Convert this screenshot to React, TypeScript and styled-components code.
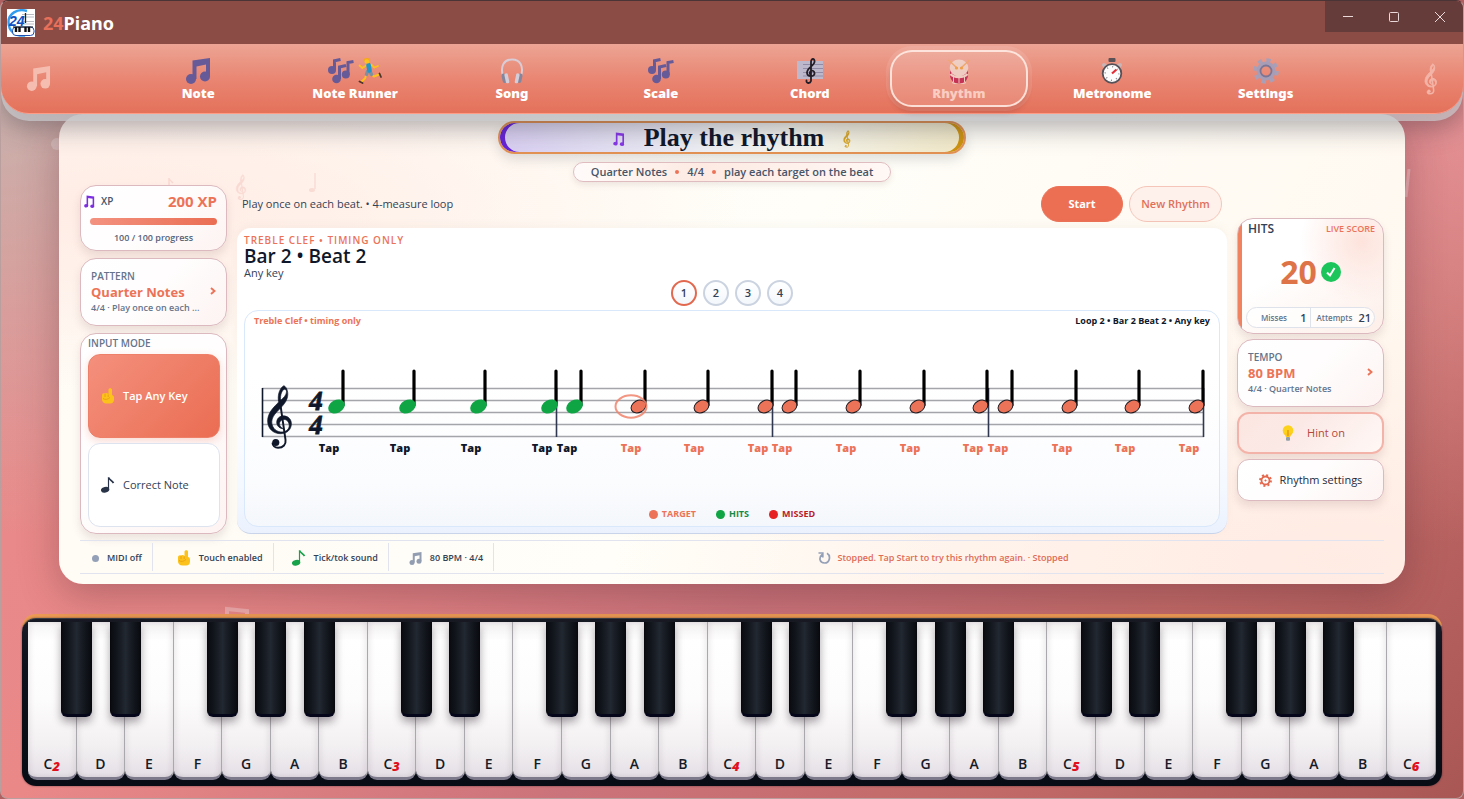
import React from 'react';
import styled, { createGlobalStyle, css } from 'styled-components';

const CORAL = '#ec7357';
const INK = '#0f172a';
const SLATE = '#64748b';
const UI = '"Trebuchet MS", "Open Sans", "Noto Sans", sans-serif';
const HEAVY = '"Segoe UI Black", "Noto Sans", sans-serif';

const GlobalStyle = createGlobalStyle`
  * { box-sizing: border-box; }
  body { margin: 0; font-family: ${UI}; color: ${INK}; background: #b06060; }
  button { font-family: inherit; margin: 0; padding: 0; border: 0; background: none; color: inherit; cursor: pointer; }
  svg { display: block; flex: none; }
  h1, h2, p, ul, dl, dd, dt { margin: 0; padding: 0; }
`;

const Page = styled.div`
  min-height: 100vh;
  position: relative;
  overflow: hidden;
  display: flex;
  flex-direction: column;
  border: 1px solid #b9a09e;
  border-top-color: #4a3436;
  border-radius: 8px;
  background:
    radial-gradient(circle at 0% 12%, rgba(190, 190, 184, 0.75), transparent 27%),
    radial-gradient(circle at 100% 18%, rgba(255, 176, 180, 0.5), transparent 25%),
    linear-gradient(135deg, #e88b8b 0%, #ea8888 36%, #cb737a 60%, #c26a68 78%, #a95755 100%);
`;

const Backdrop = styled.svg`
  position: absolute;
  inset: 0;
  pointer-events: none;
`;

const CardBackdrop = styled(Backdrop)`
  z-index: -1;
`;

/* ---------- title bar ---------- */

const TitleBar = styled.header`
  height: 43px;
  display: flex;
  align-items: center;
  gap: 8px;
  padding-left: 6px;
  background: #8a4c45;
  position: relative;
  z-index: 3;
`;

const Brand = styled.span`
  font: 700 18px/24px "Segoe UI", "Noto Sans", sans-serif;
  color: #fff;
  b { font-weight: 700; color: #e8705a; }
`;

const WindowControls = styled.div`
  margin-left: auto;
  align-self: flex-start;
  display: flex;
  background: #663c3b;
`;

const WindowButton = styled.button`
  width: 46px;
  height: 31px;
  display: grid;
  place-items: center;
`;

/* ---------- navigation ---------- */

const Nav = styled.nav`
  height: 70px;
  display: grid;
  grid-template-columns: 1fr auto 1fr;
  align-items: center;
  padding: 0 25px;
  border-radius: 0 0 28px 28px;
  border-bottom: 1px solid #ff9c86;
  background: linear-gradient(180deg, #eda494 0%, #e98673 50%, #e4715a 100%);
  box-shadow: 0 7px 0 rgba(204, 204, 207, 0.7), 0 14px 26px rgba(40, 40, 50, 0.36);
  position: relative;
  z-index: 2;
  > svg:last-child { justify-self: end; }
`;

const NavItems = styled.div`
  display: flex;
  gap: 11px;
`;

const NavItem = styled.button<{ $active?: boolean }>`
  min-width: 138px;
  height: 57px;
  padding: 2px 34px 0;
  border: 2px solid transparent;
  border-width: 2px 0;
  border-radius: 22px;
  display: flex;
  flex-direction: column;
  align-items: center;
  justify-content: center;
  font: 900 13px/18px ${HEAVY};
  color: #fff;
  ${p => p.$active && css`
    color: rgba(255, 226, 218, 0.75);
    border: 2px solid rgba(255, 238, 232, 0.85);
    background: rgba(255, 255, 255, 0.14);
    box-shadow: 0 0 0 4px rgba(255, 255, 255, 0.1), 0 6px 4px rgba(150, 60, 50, 0.25);
    svg { opacity: 0.75; }
  `}
`;

const IconPair = styled.span`
  display: flex;
  gap: 4px;
`;

/* ---------- main card ---------- */

const Card = styled.main`
  margin: 0 58px;
  padding: 7px 21px 10px;
  border-radius: 24px;
  display: flex;
  flex-direction: column;
  position: relative;
  z-index: 1;
  background:
    radial-gradient(ellipse at 5% 20%, rgba(255, 232, 224, 0.8), transparent 34%),
    radial-gradient(ellipse at 95% 95%, rgba(255, 232, 224, 0.8), transparent 40%),
    linear-gradient(120deg, #fffaf4, #fffef8 50%, #fff7ee);
  box-shadow: 0 12px 40px rgba(70, 30, 45, 0.32);
`;

const TitlePill = styled.h1`
  align-self: center;
  width: 468px;
  max-width: 100%;
  height: 33px;
  display: flex;
  align-items: center;
  justify-content: center;
  gap: 19px;
  border: 2px solid #e39254;
  border-radius: 17px;
  background: linear-gradient(90deg, #d9cff2 0%, #eef0f4 45%, #f6f5ee 65%, #f2e9c8 100%);
  box-shadow: inset 5px 0 0 #6722d8, inset -5px 0 0 #cf9410, 0 6px 12px rgba(60, 70, 80, 0.16);
  font: 700 26px/28px Georgia, "Liberation Serif", serif;
  svg { margin-top: 3px; }
`;

const SubtitlePill = styled.p`
  align-self: center;
  height: 20px;
  margin: 8px 0 3px;
  padding: 0 17px;
  display: flex;
  align-items: center;
  gap: 8px;
  border: 1px solid #dfbcc0;
  border-radius: 10px;
  background: linear-gradient(90deg, #fffbfa, #fdeae3 40%, #fff8f5);
  box-shadow: 0 3px 6px rgba(80, 50, 50, 0.1);
  font: 600 11px/18px ${UI};
  color: #475569;
  i { width: 4px; height: 4px; border-radius: 50%; background: ${CORAL}; }
`;

const Columns = styled.div`
  display: grid;
  grid-template-columns: 147px minmax(0, 1fr) 147px;
  gap: 10px;
  min-height: 349px;
`;

const Side = styled.aside<{ $right?: boolean }>`
  display: flex;
  flex-direction: column;
  gap: ${p => (p.$right ? 5 : 7)}px;
  padding-top: ${p => (p.$right ? 33 : 0)}px;
`;

const panel = css`
  border: 1px solid #dbb9bf;
  border-radius: 16px;
  background: linear-gradient(135deg, #fff, #fffdfd 50%, #fdf3f2);
  box-shadow: 0 5px 8px rgba(110, 80, 80, 0.14);
`;

const XpCard = styled.section`
  ${panel}
  height: 66px;
  padding: 5px 9px 4px 3px;
`;

const XpRow = styled.div`
  display: flex;
  align-items: center;
  gap: 6px;
  font: 600 10px/20px ${UI};
  color: #475569;
  strong { margin-left: auto; font-size: 15px; font-weight: 700; color: ${CORAL}; }
`;

const XpBar = styled.div`
  height: 7px;
  margin: 7px 0 0 6px;
  border-radius: 4px;
  background: linear-gradient(90deg, #f39280, #ea6d52);
`;

const XpNote = styled.p`
  margin: 6px 0 0 6px;
  text-align: center;
  font: 600 9px/14px ${UI};
  color: #56647a;
`;

const PickerCard = styled.button`
  ${panel}
  height: 68px;
  padding: 0 10px 3px;
  display: flex;
  align-items: center;
  justify-content: space-between;
  text-align: left;
`;

const PickerText = styled.span`
  display: flex;
  flex-direction: column;
  min-width: 0;
  font: 600 10px/16px ${UI};
  color: ${SLATE};
  strong { font-size: 13px; line-height: 17px; font-weight: 700; color: ${CORAL}; }
  small { font-size: 9px; line-height: 13px; white-space: nowrap; }
`;

const ModeCard = styled.section`
  ${panel}
  flex: 1;
  padding: 2px 6px 6px 7px;
  display: flex;
  flex-direction: column;
  gap: 4px;
  h2 { font: 600 10px/14px ${UI}; color: ${SLATE}; }
`;

const ModeButton = styled.button<{ $active?: boolean }>`
  flex: 1;
  min-height: 83px;
  padding-left: 12px;
  display: flex;
  align-items: center;
  gap: 8px;
  border: 1px solid #dde3ef;
  border-radius: 12px;
  background: #fff;
  font: 500 11px/16px ${UI};
  color: #334155;
  & + & { margin-top: 1px; }
  ${p => p.$active && css`
    border-color: #ee8069;
    background: linear-gradient(135deg, #f4907d, #ea6d52);
    box-shadow: 0 3px 8px rgba(236, 115, 87, 0.25);
    color: #fff;
    font-weight: 600;
  `}
`;

/* ---------- centre ---------- */

const Centre = styled.section`
  display: flex;
  flex-direction: column;
  gap: 6px;
  padding-top: 1px;
`;

const Toolbar = styled.div`
  height: 36px;
  display: flex;
  align-items: center;
  gap: 6px;
  padding: 0 5px;
  font: 500 11px/16px ${UI};
  color: #334155;
  p { margin-right: auto; }
`;

const PillButton = styled.button<{ $primary?: boolean }>`
  height: 36px;
  width: ${p => (p.$primary ? 82 : 93)}px;
  border-radius: 18px;
  border: 1px solid ${p => (p.$primary ? '#ec7357' : '#f6c5b9')};
  background: ${p => (p.$primary ? '#ec6f54' : '#fef1eb')};
  color: ${p => (p.$primary ? '#fff' : '#e0705a')};
  font: ${p => (p.$primary ? 700 : 600)} 11px/16px ${UI};
`;

const Score = styled.div`
  flex: 1;
  display: flex;
  flex-direction: column;
  padding: 6px 7px;
  border-radius: 14px;
  border-bottom: 1px solid #c9d4ea;
  background: linear-gradient(180deg, #fff 0%, #fff 55%, #f4f8ff 85%, #ebf2fe 100%);
  box-shadow: 0 -3px 8px rgba(150, 140, 120, 0.06);
`;

const ScoreHead = styled.header`
  p { font: 500 11px/15px ${UI}; color: #334155; }
  p:first-child { font: 600 10px/13px ${UI}; letter-spacing: 1px; color: ${CORAL}; }
  h2 { font: 600 19px/18px ${UI}; color: ${INK}; }
`;

const Beats = styled.ol`
  list-style: none;
  margin: 0 0 4px;
  padding: 0;
  display: flex;
  justify-content: center;
  gap: 6px;
`;

const Beat = styled.li<{ $on?: boolean }>`
  width: 26px;
  height: 26px;
  display: grid;
  place-items: center;
  border: 2px solid ${p => (p.$on ? '#e2694f' : '#cbd3e1')};
  border-radius: 50%;
  background: linear-gradient(180deg, #fff, #f4f7fb);
  font: 600 11px/14px ${UI};
  color: #334155;
`;

const Sheet = styled.div`
  flex: 1;
  display: flex;
  flex-direction: column;
  border: 1px solid #d9e8fb;
  border-radius: 14px;
  background: linear-gradient(180deg, #fff 30%, #fbfcfe 80%, #f4f7fb 100%);
`;

const SheetHead = styled.div`
  display: flex;
  justify-content: space-between;
  padding: 3px 9px 0;
  font: 700 9px/14px ${UI};
  span:first-child { color: ${CORAL}; }
`;

const Staff = styled.svg`
  width: 100%;
  height: auto;
  margin-top: 37px;
  font: 800 11px ${UI};
`;

const Legend = styled.ul`
  margin: auto 0 4px;
  list-style: none;
  display: flex;
  justify-content: center;
  gap: 20px;
  font: 700 9px/16px ${UI};
`;

const LegendItem = styled.li<{ $color: string }>`
  display: flex;
  align-items: center;
  gap: 4px;
  color: ${p => p.$color};
`;

const Dot = styled.i<{ $color: string; $size?: number }>`
  width: ${p => p.$size ?? 9}px;
  height: ${p => p.$size ?? 9}px;
  border-radius: 50%;
  background: ${p => p.$color};
`;

/* ---------- right column ---------- */

const HitsCard = styled.section`
  ${panel}
  height: 116px;
  padding: 2px 8px 5px;
  display: flex;
  flex-direction: column;
  justify-content: space-between;
  background:
    linear-gradient(90deg, #f0825f 0 4px, transparent 4px),
    radial-gradient(circle at 85% 20%, #fde3dc, transparent 40%),
    linear-gradient(150deg, #fff 40%, #fdeee8);
`;

const HitsHead = styled.div`
  display: flex;
  align-items: center;
  justify-content: space-between;
  padding-left: 2px;
  font: 600 9px/16px ${UI};
  color: ${CORAL};
  h2 { font: 600 12px/16px ${UI}; color: #334155; }
`;

const HitsValue = styled.div`
  display: flex;
  align-items: center;
  justify-content: center;
  gap: 4px;
  font: 700 32px/36px ${UI};
  color: #dd7347;
`;

const Tally = styled.dl`
  display: grid;
  grid-template-columns: 1fr 1fr;
  border: 1px solid #dee2ea;
  border-radius: 11px;
  background: rgba(255, 255, 255, 0.7);
  font: 600 8px/19px ${UI};
  color: ${SLATE};
  div { display: flex; justify-content: space-between; padding: 0 3px 0 6px; }
  div:first-child { padding-left: 14px; border-right: 1px solid #dee2ea; }
  dd { font-size: 11px; color: #334155; }
`;

const SideButton = styled.button<{ $tint?: boolean }>`
  ${panel}
  height: 42px;
  display: flex;
  align-items: center;
  justify-content: center;
  gap: 8px;
  border-radius: 12px;
  font: 500 11px/16px ${UI};
  color: #1e293b;
  ${p => p.$tint && css`
    gap: 13px;
    padding-left: 6px;
    border: 2px solid #f4b3a8;
    background: linear-gradient(135deg, #fce6e1, #fbe9e6 40%, #fff8f5);
    color: #b4483c;
  `}
`;

/* ---------- status ---------- */

const Status = styled.footer`
  margin-top: 6px;
  height: 34px;
  display: flex;
  align-items: center;
  border-top: 1px solid #e1e4ee;
  border-bottom: 1px solid #e1e4ee;
  font: 600 9px/16px ${UI};
  color: #334155;
`;

const StatusItem = styled.span<{ $pad: number }>`
  height: 28px;
  display: flex;
  align-items: center;
  gap: 8px;
  padding: 2px 10px 0 ${p => p.$pad}px;
  border-right: 1px solid #e1e4ee;
`;

const StatusMessage = styled.span`
  flex: 1;
  padding: 2px 0 0 8px;
  display: flex;
  align-items: center;
  justify-content: center;
  gap: 7px;
  color: #df6a55;
`;

/* ---------- piano ---------- */

const Piano = styled.section`
  margin: 30px 21px 12px;
  padding-top: 4px;
  border-radius: 14px;
  background: linear-gradient(180deg, #ec9a54 0 12px, transparent 12px);
  position: relative;
`;

const Keybed = styled.div`
  display: flex;
  padding: 3px 6px 6px;
  border-radius: 14px;
  border-top: 1px solid #3a3d46;
  background: linear-gradient(180deg, #171a24, #0d111b 30%, #080c14);
  box-shadow: 0 0 2px rgba(20, 20, 30, 0.6);
`;

const Slot = styled.div`
  flex: 1;
  position: relative;
`;

const WhiteKey = styled.button`
  width: 100%;
  height: 158px;
  padding-bottom: 4px;
  display: flex;
  align-items: flex-end;
  justify-content: center;
  border-right: 1px solid #aaa8ac;
  border-bottom: 3px solid #7d7a8c;
  border-radius: 0 0 9px 9px;
  background: linear-gradient(180deg, #f6f4f4 0, #fff 12%, #fdfcfc 50%, #f3f0f2 80%, #e4dfe5 100%);
  box-shadow: inset 3px 0 4px rgba(120, 110, 120, 0.1), inset -3px 0 4px rgba(120, 110, 120, 0.1);
  font: 600 14px/18px ${UI};
  color: #161b28;
  sub { font: italic 800 13px/14px ${UI}; color: #e0101c; vertical-align: baseline; }
`;

const BlackKey = styled.button`
  position: absolute;
  z-index: 1;
  top: 0;
  right: -32%;
  width: 64%;
  height: 95px;
  border: 1px solid #07090f;
  border-top: 0;
  border-bottom: 3px solid #05061a;
  border-radius: 0 0 6px 6px;
  background: linear-gradient(90deg, #0a0c11 0, #12161d 22%, #222831 50%, #14181f 75%, #090b10 100%);
  box-shadow: 0 5px 8px rgba(40, 30, 40, 0.4);
`;

/* ---------- drawings ---------- */

const ClefShape = ({ color, weight = 0 }: { color: string; weight?: number }) => (
  <g>
    <path
      fill={color}
      stroke={color}
      strokeWidth={weight}
      fillRule="evenodd"
      d="M52 5C62 10 67 28 62 44C58 58 44 72 32 84C18 98 12 112 16 126C21 142 36 150 52 147C64 144 70 134 68 124C66 112 56 107 48 110C38 113 36 124 41 130C44 134 48 137 52 138C40 138 31 130 30 120C29 106 40 97 52 98C66 99 76 110 75 124C74 142 60 153 42 153C20 153 2 138 2 114C2 90 18 74 32 60L36 55C32 40 36 14 52 5ZM54 16C46 18 40 34 42 50C50 44 60 34 60 24C60 20 58 16 54 16Z"
    />
    <path
      d="M39 48L57 172C59 186 50 196 34 196C24 196 17 190 17 181"
      fill="none" stroke={color} strokeWidth={4 + weight}
    />
    <circle cx="27" cy="180" r="11" fill={color} />
  </g>
);

const Clef = ({ h, color }: { h: number; color: string }) => (
  <svg width={Math.round(h * 0.44)} height={h} viewBox="-4 0 88 204">
    <ClefShape color={color} weight={6} />
  </svg>
);

const BeamedNote = ({ size = 26, color = '#665a98' }: { size?: number; color?: string }) => (
  <svg width={size} height={size} viewBox="0 0 26 26" fill={color}>
    <path d="M7.500 2.500L25 0V18H21V6.500L11.500 8.500V21H7.500Z" />
    <circle cx="6" cy="21" r="5" />
    <circle cx="20" cy="18.500" r="5" />
  </svg>
);

const OutlineNote = ({ size = 12, color }: { size?: number; color: string }) => (
  <svg width={size} height={Math.round(size * 1.2)} viewBox="0 0 12 15" fill="none" stroke={color} strokeWidth="1.800">
    <path d="M3.500 12V1.500L10.500 2.500V12.500" />
    <path d="M3.500 2.500L10.500 3.500" />
    <ellipse cx="2.200" cy="12.500" rx="1.500" ry="1.100" fill={color} />
    <ellipse cx="9.200" cy="13" rx="1.500" ry="1.100" fill={color} />
  </svg>
);

const TripleNotes = () => (
  <svg width="26" height="26" viewBox="0 0 26 26" fill="#665a98" stroke="#665a98" strokeWidth="3">
    <path fill="none" d="M6.500 12V2.800L12.500 1.500M11.500 21V9L18 7.500M20 17V4.500L25.500 3.500" />
    <g stroke="none">
      <circle cx="4" cy="12" r="4" />
      <circle cx="8.500" cy="21" r="4.300" />
      <circle cx="17.800" cy="16.500" r="4" />
    </g>
  </svg>
);

const Runner = () => (
  <svg width="24" height="26" viewBox="0 0 24 26" fill="none" strokeLinecap="round" strokeLinejoin="round">
    <path d="M9 7L4.500 10L1.500 7.500M13 6.500L16.500 9.500L20 8" stroke="#fcc21b" strokeWidth="1.800" />
    <path d="M8.500 16L7 20.500L3.500 23.500M13 16.500L16 18.500L21 16.500" stroke="#fcc21b" strokeWidth="2" />
    <path d="M1.500 23.500L4.500 25M21.500 15.500L23 19" stroke="#4e342e" strokeWidth="1.800" />
    <path d="M9.500 13.500L8.500 16.500M12 13.500L13.500 16.500" stroke="#7e8fa0" strokeWidth="3.400" />
    <path d="M10.500 7L11.500 12.500" stroke="#2196c9" strokeWidth="4.600" />
    <circle cx="9" cy="2.900" r="2.600" fill="#fcc21b" />
    <path d="M6 2.500C6.500 0 10 0 11.500 2" stroke="#f4a81a" strokeWidth="1.300" />
  </svg>
);

const Headphones = () => (
  <svg width="24" height="26" viewBox="0 0 24 26" fill="none">
    <path d="M3 18C0 8 4 1.500 12 1.500C20 1.500 24 8 21 18" stroke="#d9ccd6" strokeWidth="2" />
    <rect x="2" y="15.500" width="4" height="9.500" rx="2" fill="#83869c" transform="rotate(-12 4 20)" />
    <rect x="18" y="15.500" width="4" height="9.500" rx="2" fill="#83869c" transform="rotate(12 20 20)" />
    <rect x="5" y="15.500" width="3.500" height="10" rx="1.500" fill="#d3cdda" transform="rotate(-12 6 20)" />
    <rect x="15.500" y="15.500" width="3.500" height="10" rx="1.500" fill="#d3cdda" transform="rotate(12 18 20)" />
  </svg>
);

const SheetClef = () => (
  <svg width="26" height="26" viewBox="0 0 26 26">
    <rect y="3" width="26" height="18" fill="#bdb8cc" />
    <path d="M6 6.500H26M6 10.500H26M6 14.500H26M6 18H26" stroke="#918ba8" />
    <path
      d="M14 23C13 26 9 25.500 9.500 22.500M14 23V4C14 0 18 0 17.500 4C17 8 9.500 10 10 15C10.500 19.500 18 19 17.500 15C17 11.500 12 12 13 16"
      fill="none" stroke="#221d26" strokeWidth="1.800" strokeLinecap="round"
    />
  </svg>
);

const Drum = () => (
  <svg width="26" height="26" viewBox="0 0 26 26">
    <path d="M4 10V18C5 23 8 25.500 13 25.500C18 25.500 21 23 22 18V10Z" fill="#b81246" />
    <path d="M4.500 16C8 20 18 20 21.500 16" fill="none" stroke="#f2dcd2" strokeWidth="2.500" />
    <path d="M7.500 19V24M13 20V25M18.500 19V24" stroke="#f2dcd2" strokeWidth="1" />
    <path d="M6 24.500C10 26.500 16 26.500 20 24.500" fill="none" stroke="#f2dcd2" strokeWidth="1.200" />
    <ellipse cx="13" cy="10" rx="9.300" ry="8.500" fill="#f0ddd3" />
    <path d="M2.500 2L11 10M23.500 2L15 10" stroke="#f0a860" strokeWidth="1.400" />
    <circle cx="10.500" cy="10" r="1.600" fill="#efa030" />
    <circle cx="15.500" cy="10" r="1.600" fill="#efa030" />
  </svg>
);

const Stopwatch = () => (
  <svg width="26" height="26" viewBox="0 0 26 26">
    <rect x="9.500" y="0" width="7" height="4" rx="1" fill="#5b5257" />
    <path d="M5 7L7 9M21 7L19 9" stroke="#c9b5b6" strokeWidth="4" strokeLinecap="round" />
    <circle cx="13" cy="15.500" r="9.300" fill="#fdfcfc" stroke="#55525a" strokeWidth="1.800" />
    <circle cx="13" cy="15.500" r="6.800" fill="none" stroke="#8a8790" strokeWidth="1.400" strokeDasharray="1 4.340" />
    <path d="M13 15.500L17.500 11.500" stroke="#e12d38" strokeWidth="2.200" />
  </svg>
);

const Gear = () => (
  <svg width="26" height="26" viewBox="0 0 26 26" fill="none">
    <circle cx="13" cy="13" r="10.800" stroke="#a9a0b8" strokeWidth="4" strokeDasharray="4.250 4.230" />
    <circle cx="13" cy="13" r="7.500" stroke="#a79db6" strokeWidth="4" />
    <circle cx="13" cy="13" r="5.500" stroke="#7c7696" strokeWidth="1.800" />
  </svg>
);

const SmallGear = () => (
  <svg width="13" height="13" viewBox="0 0 13 13" fill="none" stroke="#e3684d">
    <circle cx="6.500" cy="6.500" r="4" strokeWidth="1.800" />
    <circle cx="6.500" cy="6.500" r="5.500" strokeWidth="1.800" strokeDasharray="2 2.320" />
    <circle cx="6.500" cy="6.500" r="0.800" fill="#e3684d" strokeWidth="0.500" />
  </svg>
);

const Finger = () => (
  <svg width="14" height="16" viewBox="0 0 14 16">
    <path
      d="M7.500 6V1.800C7.500 -0.200 11 -0.200 11 1.800V7C13 7.500 13 9 13 10V11.500C13 14 11.500 15.500 9 15.500H5.500C2.500 15.500 1 13.500 1 11.500V7.500C1 5.500 2.500 5 4 5.500C5 4.500 6.500 5 7.500 6Z"
      fill="#fcc21b"
    />
    <path d="M4 6V9M7.200 6.500V9M2 10.500C4 12 7 11.500 9 9.500" fill="none" stroke="#e59a12" strokeWidth="0.800" />
  </svg>
);

const EighthNote = ({ color }: { color: string }) => (
  <svg width="14" height="16" viewBox="0 0 14 16">
    <ellipse cx="4.200" cy="12.800" rx="4.200" ry="2.800" fill={color} transform="rotate(-12 4 13)" />
    <path d="M7.500 12.500V0.500" stroke={color} strokeWidth="1.200" />
    <path d="M7.500 0.500C8.500 3 11 3.500 12.500 6" fill="none" stroke={color} strokeWidth="1.800" />
  </svg>
);

const Bulb = () => (
  <svg width="12" height="16" viewBox="0 0 12 16">
    <circle cx="6" cy="5.500" r="5.300" fill="#fcd21c" />
    <path d="M2 8L4 12H8L10 8Z" fill="#fcc81c" />
    <path d="M6 5V11" stroke="#e89b10" strokeWidth="1.500" />
    <rect x="4" y="12" width="4" height="3.800" rx="1" fill="#94a0a6" />
  </svg>
);

const Chevron = () => (
  <svg width="6" height="8" viewBox="0 0 6 8" fill="none" stroke={CORAL} strokeWidth="1.900">
    <path d="M1 1L4.500 4L1 7" />
  </svg>
);

const Check = () => (
  <svg width="20" height="20" viewBox="0 0 20 20">
    <circle cx="10" cy="10" r="10" fill="#1bc55c" />
    <path d="M6 10.500L9 13.500L13.500 6" fill="none" stroke="#fff" strokeWidth="2" />
  </svg>
);

const Reload = () => (
  <svg width="13" height="12" viewBox="0 0 13 12" fill="none" stroke="#94a0b8" strokeWidth="1.700">
    <path d="M9 1.200C13 3.500 12 11 6.500 11C1.500 11 0.500 5.500 4.200 2.500M0.500 1H4.800V5.500" />
  </svg>
);

const Logo = () => (
  <svg width="28" height="28" viewBox="0 0 28 28">
    <rect width="28" height="28" fill="#fff" />
    <path d="M20 2C10 -1 1.500 5 1.500 13C1.500 22 8 27.500 18 26.500" fill="none" stroke="#2f9cf0" strokeWidth="2.400" />
    <path d="M15 5.500H27M15 8H27M15 12.500H27M15 15H27" stroke="#b9bcc2" />
    <path d="M18.500 4V14" stroke="#222" strokeWidth="1.300" />
    <text x="2" y="16.500" fontFamily="Liberation Sans, Arial, sans-serif" fontStyle="italic" fontWeight="700" fontSize="14" fill="#0f4fc0">24</text>
    <rect x="5.500" y="18" width="21.500" height="8.500" rx="3.500" fill="#fff" stroke="#1a4fb0" />
    <path d="M9 18V23M12.500 18V23M18.500 18V23M22 18V23" stroke="#111" strokeWidth="2.400" />
    <path d="M6 18H26" stroke="#111" />
  </svg>
);

/* ---------- data ---------- */

const NAV = [
  { label: 'Note', icon: <BeamedNote /> },
  { label: 'Note Runner', icon: <IconPair><TripleNotes /><Runner /></IconPair> },
  { label: 'Song', icon: <Headphones /> },
  { label: 'Scale', icon: <TripleNotes /> },
  { label: 'Chord', icon: <SheetClef /> },
  { label: 'Rhythm', icon: <Drum />, active: true },
  { label: 'Metronome', icon: <Stopwatch /> },
  { label: 'Settings', icon: <Gear /> },
];

const TAPS = [85, 156, 227, 298, 323, 387, 450, 514, 538, 602, 666, 729, 754, 818, 881, 945];
const PLAYED = 4;
const CURRENT = 5;
const BARLINES = [312, 528, 744, 959];

const LETTERS = ['C', 'D', 'E', 'F', 'G', 'A', 'B'];
const KEYS = Array.from({ length: 29 }, (_, i) => ({
  letter: LETTERS[i % 7],
  octave: 2 + Math.floor(i / 7),
  sharp: i < 28 && i % 7 !== 2 && i % 7 !== 6,
}));

const StaffDrawing = () => (
  <Staff viewBox="1 0 974 98" role="img" aria-label="Four measures of quarter notes">
    {[23, 35, 47, 59, 71].map(y => (
      <path key={y} d={`M18 ${y + 0.5}H960`} stroke="#a3a5aa" strokeWidth="1.300" />
    ))}
    <path d="M18.500 23V72" stroke={INK} strokeWidth="1.600" />
    {BARLINES.map(x => (
      <path key={x} d={`M${x + 0.5} 23V72`} stroke="#303750" strokeWidth="1.600" />
    ))}
    <g transform="translate(23 19) scale(0.325)">
      <ClefShape color={INK} weight={2} />
    </g>
    {[45, 69].map(y => (
      <text key={y} x="72" y={y} textAnchor="middle" fill={INK} stroke={INK} strokeWidth="0.800" fontFamily="Liberation Serif, serif" fontStyle="italic" fontWeight="700" fontSize="27">4</text>
    ))}
    {TAPS.map((x, i) => {
      const hit = i <= PLAYED;
      return (
        <g key={x}>
          <path d={`M${x + 14} 6V40`} stroke="#000" strokeWidth="3.200" strokeLinecap="round" />
          <ellipse
            cx={x + 7.5} cy="41.500" rx={hit ? 8.8 : 7.8} ry={hit ? 6.4 : 5.9}
            transform={`rotate(-28 ${x + 7.5} 41.500)`}
            fill={hit ? '#0fa444' : CORAL}
            stroke={hit ? 'none' : '#1c1a20'}
          />
          <text x={x} y="87" textAnchor="middle" fill={hit ? INK : CORAL}>Tap</text>
        </g>
      );
    })}
    <ellipse cx={TAPS[CURRENT]} cy="41.500" rx="15.500" ry="11.200" fill="none" stroke="#f0836b" strokeOpacity="0.850" strokeWidth="2" />
  </Staff>
);

export default function App() {
  return (
    <Page>
      <GlobalStyle />
      <Backdrop width="100%" height="100%" aria-hidden="true">
        <circle cx="56" cy="143" r="6" fill="#fff" fillOpacity="0.250" />
        <path d="M226 623V608L246 610V622" fill="none" stroke="#fff" strokeOpacity="0.300" strokeWidth="4" />
        <path d="M1408 168L1405 196" stroke="#fff" strokeOpacity="0.300" strokeWidth="3" />
      </Backdrop>

      <TitleBar>
        <Logo />
        <Brand><b>24</b>Piano</Brand>
        <WindowControls>
          <WindowButton aria-label="Minimize">
            <svg width="10" height="10" stroke="#ead9d8"><path d="M0 4.500H10" /></svg>
          </WindowButton>
          <WindowButton aria-label="Maximize">
            <svg width="10" height="10" fill="none" stroke="#ead9d8"><rect x="0.500" y="0.500" width="9" height="9" rx="1" /></svg>
          </WindowButton>
          <WindowButton aria-label="Close">
            <svg width="10" height="10" stroke="#ead9d8"><path d="M0 0L10 10M10 0L0 10" /></svg>
          </WindowButton>
        </WindowControls>
      </TitleBar>

      <Nav>
        <BeamedNote size={25} color="#f4bdb0" />
        <NavItems>
          {NAV.map(n => (
            <NavItem key={n.label} $active={n.active}>{n.icon}{n.label}</NavItem>
          ))}
        </NavItems>
        <Clef h={32} color="#f3b5a8" />
      </Nav>

      <Card>
        <CardBackdrop width="100%" height="100%" aria-hidden="true">
          <g opacity="0.200">
            <g transform="translate(177 60) scale(0.130)"><ClefShape color="#e58a80" weight={4} /></g>
            <path d="M256 59V75" stroke="#e58a80" strokeWidth="1.500" />
            <ellipse cx="253" cy="76" rx="3" ry="2" fill="#e58a80" />
            <path d="M110 64V71M110 65L114 69" stroke="#e58a80" strokeWidth="1.500" />
          </g>
        </CardBackdrop>
        <TitlePill>
          <OutlineNote size={12} color="#8838e8" />
          Play the rhythm
          <Clef h={18} color="#d9a520" />
        </TitlePill>
        <SubtitlePill>Quarter Notes <i /> 4/4 <i /> play each target on the beat</SubtitlePill>

        <Columns>
          <Side>
            <XpCard>
              <XpRow><OutlineNote size={11} color="#7c2fe0" />XP<strong>200 XP</strong></XpRow>
              <XpBar />
              <XpNote>100 / 100 progress</XpNote>
            </XpCard>
            <PickerCard>
              <PickerText>
                PATTERN
                <strong>Quarter Notes</strong>
                <small>4/4 · Play once on each ...</small>
              </PickerText>
              <Chevron />
            </PickerCard>
            <ModeCard>
              <h2>INPUT MODE</h2>
              <ModeButton $active><Finger />Tap Any Key</ModeButton>
              <ModeButton><EighthNote color="#283348" />Correct Note</ModeButton>
            </ModeCard>
          </Side>

          <Centre>
            <Toolbar>
              <p>Play once on each beat. • 4-measure loop</p>
              <PillButton $primary>Start</PillButton>
              <PillButton>New Rhythm</PillButton>
            </Toolbar>
            <Score>
              <ScoreHead>
                <p>TREBLE CLEF • TIMING ONLY</p>
                <h2>Bar 2 • Beat 2</h2>
                <p>Any key</p>
              </ScoreHead>
              <Beats>
                <Beat $on>1</Beat>
                <Beat>2</Beat>
                <Beat>3</Beat>
                <Beat>4</Beat>
              </Beats>
              <Sheet>
                <SheetHead>
                  <span>Treble Clef • timing only</span>
                  <span>Loop 2 • Bar 2 Beat 2 • Any key</span>
                </SheetHead>
                <StaffDrawing />
                <Legend>
                  <LegendItem $color={CORAL}><Dot $color={CORAL} />TARGET</LegendItem>
                  <LegendItem $color="#168a45"><Dot $color="#0fa444" />HITS</LegendItem>
                  <LegendItem $color="#b91c2c"><Dot $color="#e62222" />MISSED</LegendItem>
                </Legend>
              </Sheet>
            </Score>
          </Centre>

          <Side $right>
            <HitsCard>
              <HitsHead><h2>HITS</h2>LIVE SCORE</HitsHead>
              <HitsValue>20<Check /></HitsValue>
              <Tally>
                <div><dt>Misses</dt><dd>1</dd></div>
                <div><dt>Attempts</dt><dd>21</dd></div>
              </Tally>
            </HitsCard>
            <PickerCard>
              <PickerText>
                TEMPO
                <strong>80 BPM</strong>
                <small>4/4 · Quarter Notes</small>
              </PickerText>
              <Chevron />
            </PickerCard>
            <SideButton $tint><Bulb />Hint on</SideButton>
            <SideButton><SmallGear />Rhythm settings</SideButton>
          </Side>
        </Columns>

        <Status>
          <StatusItem $pad={12}><Dot $color="#94a0b8" $size={7} />MIDI off</StatusItem>
          <StatusItem $pad={24}><Finger />Touch enabled</StatusItem>
          <StatusItem $pad={18}><EighthNote color="#16a34a" />Tick/tok sound</StatusItem>
          <StatusItem $pad={20}><BeamedNote size={13} color="#929db2" />80 BPM · 4/4</StatusItem>
          <StatusMessage>
            <Reload />
            Stopped. Tap Start to try this rhythm again. · Stopped
          </StatusMessage>
        </Status>
      </Card>

      <Piano aria-label="Keyboard">
        <Keybed>
          {KEYS.map((k, i) => (
            <Slot key={i}>
              <WhiteKey>{k.letter}{k.letter === 'C' && <sub>{k.octave}</sub>}</WhiteKey>
              {k.sharp && <BlackKey aria-label={`${k.letter} sharp ${k.octave}`} />}
            </Slot>
          ))}
        </Keybed>
      </Piano>
    </Page>
  );
}
